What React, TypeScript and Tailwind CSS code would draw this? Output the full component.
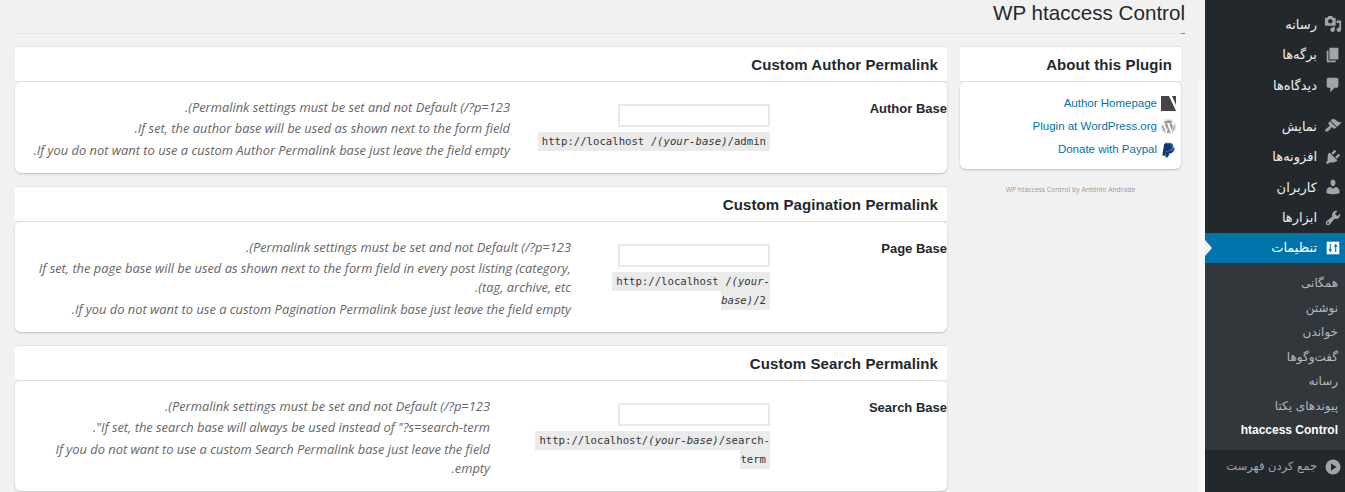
import { ReactNode } from 'react'
import { FaPaypal, FaWordpress } from 'react-icons/fa'

const menuTop = [
  { label: 'رسانه', d: 'M13 11V4c0-.55-.45-1-1-1h-1.67L9 1H5L3.67 3H2c-.55 0-1 .45-1 1v7c0 .55.45 1 1 1h10c.55 0 1-.45 1-1zM7 4.5c1.38 0 2.5 1.12 2.5 2.5S8.38 9.5 7 9.5 4.5 8.38 4.5 7 5.62 4.5 7 4.5zM14 6h5v10.5c0 1.38-1.12 2.5-2.5 2.5S14 17.88 14 16.5s1.12-2.5 2.5-2.5c.17 0 .34.02.5.05V9h-3V6zm-4 8.05V13h2v3.5c0 1.38-1.12 2.5-2.5 2.5S7 17.88 7 16.5 8.12 14 9.5 14c.17 0 .34.02.5.05z' },
  { label: 'برگه‌ها', d: 'M6 15V2h10v13H6zm-1 1h8v2H3V5h2v11z' },
  { label: 'دیدگاه‌ها', d: 'M5 2h9c1.1 0 2 .9 2 2v7c0 1.1-.9 2-2 2h-2l-5 5v-5H5c-1.1 0-2-.9-2-2V4c0-1.1.9-2 2-2z' },
]

const menuBottom = [
  { label: 'نمایش', d: 'M14.48 11.06L7.41 3.99l1.5-1.5c.5-.56 2.3-.47 3.51.32 1.21.8 1.43 1.28 2.91 2.1 1.18.64 2.45 1.26 4.45.85zm-.71.71L6.7 4.7 4.93 6.47c-.39.39-.39 1.02 0 1.41l1.06 1.06c.39.39.39 1.03 0 1.42-.6.6-1.43 1.11-2.21 1.69-.35.26-.7.53-1.01.84C1.43 13.23.76 14.91 1.7 15.9c.94.95 2.68.23 3.99-1.07.31-.31.58-.66.84-1.02.58-.78 1.09-1.61 1.69-2.21.39-.39 1.02-.39 1.41 0l1.06 1.06c.39.39 1.02.39 1.41 0z' },
  { label: 'افزونه‌ها', d: 'M13.11 4.36L9.87 7.6 8 5.73l3.24-3.24c.35-.34 1.05-.2 1.56.32.52.51.66 1.21.31 1.55zm-8 1.77l.91-1.12 9.01 9.01-1.19.84c-.71.71-2.63 1.16-3.82 1.16H6.14L4.9 17.26c-.59.59-1.54.59-2.12 0-.59-.58-.59-1.53 0-2.12l1.24-1.24v-3.88c0-1.13.4-3.19 1.09-3.89zm7.26 3.97l3.24-3.24c.34-.35 1.04-.21 1.55.31.52.51.66 1.21.31 1.55l-3.24 3.25z' },
  { label: 'کاربران', d: 'M10 9.25c-2.27 0-2.73-3.44-2.73-3.44C7 4.02 7.82 2 9.97 2c2.16 0 2.98 2.02 2.71 3.81 0 0-.41 3.44-2.68 3.44zm0 2.57L12.72 10c2.39 0 4.52 2.33 4.52 4.53v2.49s-3.65 1.13-7.24 1.13c-3.65 0-7.24-1.13-7.24-1.13v-2.49c0-2.25 1.94-4.48 4.47-4.48z' },
  { label: 'ابزارها', d: 'M16.68 9.77c-1.34 1.34-3.3 1.67-4.95.99l-5.41 6.52c-.99.99-2.59.99-3.58 0s-.99-2.59 0-3.57l6.52-5.42c-.68-1.65-.35-3.61.99-4.95 1.28-1.28 3.12-1.62 4.72-1.06l-2.89 2.89 2.82 2.82 2.86-2.87c.53 1.58.18 3.39-1.08 4.69zM3.81 16.21c.4.39 1.04.39 1.43 0 .4-.4.4-1.04 0-1.43-.39-.4-1.03-.4-1.43 0-.39.39-.39 1.03 0 1.43z' },
]

const subMenu = ['همگانی', 'نوشتن', 'خواندن', 'گفت‌وگوها', 'رسانه', 'پیوندهای یکتا']

function MenuIcon({ d }: { d: string }) {
  return (
    <svg viewBox="0 0 20 20" className="w-[18px] h-[18px] shrink-0 fill-[#a0a5aa]">
      <path d={d} />
    </svg>
  )
}

function MenuRow({ label, d }: { label: string; d: string }) {
  return (
    <div className="h-[30.5px] flex items-center gap-[7px] pr-[3px] text-[13px] text-[#eee]">
      <MenuIcon d={d} />
      <span>{label}</span>
    </div>
  )
}

function Sidebar() {
  return (
    <div className="w-[140px] shrink-0 h-full bg-[#23282d] font-['DejaVu_Sans',sans-serif] overflow-hidden">
      <div className="pt-[9px]">
        {menuTop.map((m) => (
          <MenuRow key={m.label} {...m} />
        ))}
      </div>
      <div className="mt-[10.5px]">
        {menuBottom.map((m) => (
          <MenuRow key={m.label} {...m} />
        ))}
      </div>
      <div className="relative h-[30px] bg-[#0073aa] flex items-center gap-[7px] pr-[3px] text-[13px] text-white">
        <svg viewBox="0 0 20 20" className="w-[18px] h-[18px] shrink-0">
          <rect x="3" y="3" width="14" height="14" fill="#fff" />
          <path d="M7 5.5v7.5M13 14.5V7" fill="none" stroke="#0073aa" strokeWidth="1.2" />
          <path d="M5 11.5h4L7 15zM11 8.5h4L13 5z" fill="#0073aa" />
        </svg>
        <span>تنظیمات</span>
        <span className="absolute right-full translate-x-[7px] top-1/2 -translate-y-1/2 border-y-[8px] border-y-transparent border-l-[7px] border-l-[#f1f1f1] w-0 h-0" />
      </div>
      <div className="bg-[#32373c] pt-[8px] pb-[7px] pr-[7px] text-[12px] text-[#b4b9be]">
        {subMenu.map((s) => (
          <div key={s} className="h-[24.5px] flex items-center">
            {s}
          </div>
        ))}
        <div className="h-[24.5px] flex items-center font-bold text-[12px] text-white font-['Liberation_Sans',sans-serif]">
          htaccess Control
        </div>
      </div>
      <div className="h-[34px] flex items-center gap-[8px] pr-[4px] text-[11.5px] text-[#a0a5aa]">
        <svg viewBox="0 0 16 16" className="w-[16px] h-[16px] shrink-0">
          <circle cx="8" cy="8" r="7.5" fill="#a0a5aa" />
          <path d="M6 4.5v7l5.5-3.5z" fill="#23282d" />
        </svg>
        <span>جمع کردن فهرست</span>
      </div>
    </div>
  )
}

function Panel({ title, children }: { title: string; children: ReactNode }) {
  return (
    <div>
      <div className="h-[35px] bg-white border-b border-[#e2e2e2] rounded-t-[2px] flex items-center pr-[9px] pt-[2px] font-['Liberation_Sans',sans-serif] font-bold text-[15px] tracking-[0.1px] text-[#23282d] shadow-[0_-1px_1px_rgba(0,0,0,0.06)]">
        {title}
      </div>
      <div className="bg-white rounded-[6px] shadow-[0_1px_2px_rgba(0,0,0,0.22)]">{children}</div>
    </div>
  )
}

function Note({ children }: { children: ReactNode }) {
  return <p className="mb-[2.5px] leading-[19px]">{children}</p>
}

function Field(props: {
  label: string
  fieldClass: string
  descClass: string
  code: ReactNode
  notes: ReactNode
}) {
  return (
    <div className="flex pt-[15.5px] pb-[11px]">
      <div className="w-[167px] shrink-0 pt-[1px] leading-[19px] font-['Liberation_Sans',sans-serif] font-bold text-[13px] text-[#23282d]">
        {props.label}
      </div>
      <div className={`shrink-0 mr-[10px] pt-[6px] ${props.fieldClass}`}>
        <div className="w-[152px] h-[23px] bg-white border-2 border-[#e8e8e8]" />
        <div className="mt-[5.5px] leading-[19px] text-[10.65px] text-[#32373c]">
          <code dir="ltr" className="bg-[#ebebeb] px-[4px] py-[3px] font-['DejaVu_Sans_Mono',monospace]">{props.code}</code>
        </div>
      </div>
      <div className={`shrink-0 font-['Open_Sans',sans-serif] italic text-[12.88px] text-[#666] ${props.descClass}`}>
        {props.notes}
      </div>
    </div>
  )
}

const permalinkNote = (
  <Note>
    <bdi>Permalink settings must be set and not Default (/?p=123</bdi>).
  </Note>
)

export default function App() {
  return (
    <div dir="rtl" className="flex w-[1345px] h-[492px] overflow-hidden bg-[#f1f1f1] font-['Open_Sans',sans-serif]">
      <Sidebar />
      <div className="w-[6px] shrink-0 mt-[80px] bg-[#f8f8f8]" />
      <div className="flex-1 min-w-0">
        <div className="relative mr-[14px] ml-[15px] h-[34px] border-b border-[#e6e6e6] font-['Liberation_Sans',sans-serif] text-[20.6px] leading-[24px] pt-[1px] text-[#23282d]">
          WP htaccess Control
          <span className="absolute right-0 bottom-[-1px] w-[4px] h-px bg-[#46b450]" />
        </div>
        <div className="flex gap-[13px] mr-[18px] ml-[15px] mt-[13px]">
          <div className="w-[221px] shrink-0">
            <Panel title="About this Plugin">
              <div className="pt-[10px] pb-[8px] pr-[5px] font-['Liberation_Sans',sans-serif] text-[11.5px] text-[#0073aa]">
                <div className="h-[23px] flex items-center gap-[4px]">
                  <svg viewBox="0 0 15 15" className="w-[15px] h-[15px] shrink-0">
                    <rect width="15" height="15" fill="#444" />
                    <path d="M8 0H11L15 9V15z" fill="#fff" />
                  </svg>
                  <span>Author Homepage</span>
                </div>
                <div className="h-[23px] flex items-center gap-[4px]">
                  <FaWordpress className="w-[15px] h-[15px] shrink-0 text-[#999]" />
                  <span>Plugin at WordPress.org</span>
                </div>
                <div className="h-[23px] flex items-center gap-[4px]">
                  <span className="relative w-[15px] h-[16px] shrink-0">
                    <FaPaypal className="absolute right-0 top-0 w-[14px] h-[15px] text-[#2a7fc1]" />
                    <FaPaypal className="absolute left-0 top-[1px] w-[14px] h-[15px] text-[#12396f]" />
                  </span>
                  <span>Donate with Paypal</span>
                </div>
              </div>
            </Panel>
            <p className="mt-[15.5px] text-center text-[6.8px] text-[#999]">WP htaccess Control by António Andrade</p>
          </div>
          <div className="flex-1 min-w-0 flex flex-col gap-[14px]">
            <Panel title="Custom Author Permalink">
              <Field
                label="Author Base"
                fieldClass="w-[233px]"
                descClass="mr-[27px] w-[490px]"
                code={<>http://localhost /<em>(your-base)</em>/admin</>}
                notes={
                  <>
                    {permalinkNote}
                    <Note>If set, the author base will be used as shown next to the form field.</Note>
                    <Note>If you do not want to use a custom Author Permalink base just leave the field empty.</Note>
                  </>
                }
              />
            </Panel>
            <Panel title="Custom Pagination Permalink">
              <Field
                label="Page Base"
                fieldClass="w-[159px]"
                descClass="mr-[40px] w-[538px]"
                code={<>http://localhost /<em>(your-base)</em>/2</>}
                notes={
                  <>
                    {permalinkNote}
                    <Note>
                      <bdi>If set, the page base will be used as shown next to the form field in every post listing (category, tag, archive, etc</bdi>).
                    </Note>
                    <Note>If you do not want to use a custom Pagination Permalink base just leave the field empty.</Note>
                  </>
                }
              />
            </Panel>
            <Panel title="Custom Search Permalink">
              <Field
                label="Search Base"
                fieldClass="w-[235px]"
                descClass="mr-[45px] w-[445px]"
                code={<>http://localhost/<em>(your-base)</em>/search-term</>}
                notes={
                  <>
                    {permalinkNote}
                    <Note>If set, the search base will always be used instead of "?s=search-term".</Note>
                    <Note>If you do not want to use a custom Search Permalink base just leave the field empty.</Note>
                  </>
                }
              />
            </Panel>
          </div>
        </div>
      </div>
    </div>
  )
}
